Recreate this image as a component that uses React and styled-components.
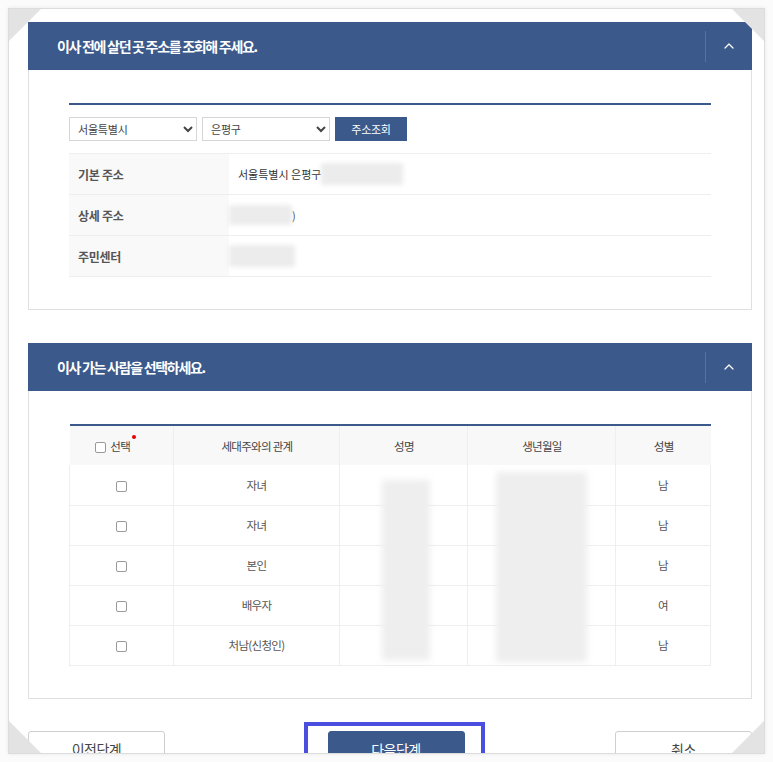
import React from "react";
import styled, { createGlobalStyle } from "styled-components";
import { ChevronUp } from "lucide-react";

const GlobalStyle = createGlobalStyle`
  html, body { margin: 0; padding: 0; background: #fbfbfb; }
  body { font-family: "Noto Sans CJK KR", "Noto Sans", sans-serif; color: #444; }
  * { box-sizing: border-box; }
`;

const Frame = styled.div`
  position: relative;
  margin: 8px;
  width: 757px;
  height: 746px;
  background: #fff;
  border: 1px solid #dcdcdc;
  box-shadow: 0 0 4px rgba(0, 0, 0, 0.08);
  overflow: hidden;
  padding: 13px 12px 0 19px;
`;

const Corner = styled.div`
  position: absolute;
  width: 32px;
  height: 32px;
  background: #e3e3e3;
  z-index: 5;
  ${(p) => (p.$v === "top" ? "top: 0;" : "bottom: 0;")}
  ${(p) => (p.$h === "left" ? "left: 0;" : "right: 0;")}
  clip-path: ${(p) =>
    p.$v === "top" && p.$h === "left"
      ? "polygon(0 0, 100% 0, 0 100%)"
      : p.$v === "top"
      ? "polygon(0 0, 100% 0, 100% 100%)"
      : p.$h === "left"
      ? "polygon(0 0, 100% 100%, 0 100%)"
      : "polygon(100% 0, 100% 100%, 0 100%)"};
`;

const Panel = styled.section`
  border: 1px solid #e0e0e0;
  border-top: none;
  margin-bottom: 33px;
`;

const PanelHead = styled.div`
  height: 48px;
  margin: 0 -1px;
  background: #3b5a8b;
  display: flex;
  align-items: center;
  justify-content: space-between;
  padding-left: 29px;
`;

const PanelTitle = styled.h2`
  margin: 0;
  color: #fff;
  font-size: 14px;
  font-weight: 700;
  letter-spacing: -1.3px;
`;

const Toggle = styled.div`
  width: 47px;
  height: 31px;
  border-left: 1px solid rgba(255, 255, 255, 0.15);
  display: flex;
  align-items: center;
  justify-content: center;
  color: #fff;
`;

const PanelBody = styled.div`
  padding: 33px 40px 32px 40px;
`;

const SearchBar = styled.div`
  border-top: 2px solid #3b5a8b;
  padding-top: 12px;
  display: flex;
  gap: 5px;
  margin-bottom: 12px;
`;

const Select = styled.select`
  width: 128px;
  height: 24px;
  border: 1px solid #d6d6d6;
  background: #fff;
  font-family: inherit;
  font-size: 11px;
  letter-spacing: -0.2px;
  color: #444;
  padding: 0 4px;
`;

const SearchButton = styled.button`
  width: 72px;
  height: 24px;
  border: none;
  background: #3b5a8b;
  color: #fff;
  font-family: inherit;
  font-size: 11px;
  letter-spacing: -0.3px;
`;

const InfoTable = styled.div`
  border-top: 1px solid #eee;
`;

const InfoRow = styled.div`
  display: grid;
  grid-template-columns: 160px 1fr;
  height: 41px;
  border-bottom: 1px solid #eee;
`;

const InfoLabel = styled.div`
  background: #f9f9f9;
  display: flex;
  align-items: center;
  padding-left: 9px;
  font-size: 12px;
  font-weight: 700;
  letter-spacing: -0.3px;
  color: #555;
`;

const InfoValue = styled.div`
  display: flex;
  align-items: center;
  padding-left: ${(p) => (p.$flush ? "0" : "9px")};
  font-size: 11px;
  color: #333;
`;

const Blur = styled.span`
  display: inline-block;
  width: ${(p) => p.$w}px;
  height: ${(p) => p.$h || 22}px;
  background: #ececec;
  filter: blur(2px);
  border-radius: 2px;
`;

const TableWrap = styled.div`
  position: relative;
`;

const Grid = styled.table`
  width: 100%;
  border-collapse: collapse;
  border-top: 2px solid #3b5a8b;
  table-layout: fixed;
  font-size: 11.5px;
  letter-spacing: -0.7px;
  color: #555;
`;

const Th = styled.th`
  height: 40px;
  background: #f8f8f8;
  font-weight: 400;
  color: #444;
  border-right: 1px solid #eee;
  padding-right: ${(p) => (p.$shift ? "18px" : "0")};
  &:last-child { border-right: none; }
`;

const Td = styled.td`
  height: 40px;
  text-align: center;
  border: 1px solid #eee;
  border-top: none;
`;

const Check = styled.span`
  display: inline-block;
  width: 11px;
  height: 11px;
  border: 1px solid #999;
  border-radius: 2px;
  vertical-align: middle;
  margin-right: ${(p) => (p.$gap ? "4px" : "0")};
  background: #fff;
`;

const Required = styled.span`
  position: relative;
  &::after {
    content: "";
    position: absolute;
    right: -6px;
    top: -3px;
    width: 4px;
    height: 4px;
    border-radius: 50%;
    background: #e60000;
  }
`;

const Redaction = styled.div`
  position: absolute;
  left: ${(p) => p.$x}px;
  top: ${(p) => p.$y}px;
  width: ${(p) => p.$w}px;
  height: ${(p) => p.$h}px;
  background: #eeeeee;
  filter: blur(3px);
`;

const Actions = styled.div`
  display: flex;
  justify-content: space-between;
  align-items: flex-start;
  margin-top: -10px;
`;

const Button = styled.button`
  width: 137px;
  height: 42px;
  margin-top: 9px;
  border: 1px solid ${(p) => (p.$primary ? "#3b5a8b" : "#cfcfcf")};
  border-radius: 3px;
  background: ${(p) => (p.$primary ? "#3b5a8b" : "#fff")};
  color: ${(p) => (p.$primary ? "#fff" : "#444")};
  font-family: inherit;
  font-size: 14px;
  letter-spacing: -0.5px;
  padding: 0 0 6px;
`;

const Highlight = styled.div`
  border: 4px solid #4b4fe0;
  padding: 5px 16px 10px 20px;
  margin-left: 8px;
`;

const members = [
  { rel: "자녀", sex: "남" },
  { rel: "자녀", sex: "남" },
  { rel: "본인", sex: "남" },
  { rel: "배우자", sex: "여" },
  { rel: "처남(신청인)", sex: "남" },
];

export default function App() {
  return (
    <>
      <GlobalStyle />
      <Frame>
        <Corner $v="top" $h="left" />
        <Corner $v="top" $h="right" />
        <Corner $v="bottom" $h="left" />
        <Corner $v="bottom" $h="right" />

        <Panel>
          <PanelHead>
            <PanelTitle>이사 전에 살던 곳 주소를 조회해 주세요.</PanelTitle>
            <Toggle>
              <ChevronUp size={16} strokeWidth={1.8} />
            </Toggle>
          </PanelHead>
          <PanelBody>
            <SearchBar>
              <Select defaultValue="서울특별시">
                <option>서울특별시</option>
              </Select>
              <Select defaultValue="은평구">
                <option>은평구</option>
              </Select>
              <SearchButton>주소조회</SearchButton>
            </SearchBar>
            <InfoTable>
              <InfoRow>
                <InfoLabel>기본 주소</InfoLabel>
                <InfoValue>
                  서울특별시 은평구 <Blur $w={82} $h={22} />
                </InfoValue>
              </InfoRow>
              <InfoRow>
                <InfoLabel>상세 주소</InfoLabel>
                <InfoValue $flush>
                  <Blur $w={63} $h={20} />)
                </InfoValue>
              </InfoRow>
              <InfoRow>
                <InfoLabel>주민센터</InfoLabel>
                <InfoValue $flush>
                  <Blur $w={66} $h={22} />
                </InfoValue>
              </InfoRow>
            </InfoTable>
          </PanelBody>
        </Panel>

        <Panel>
          <PanelHead>
            <PanelTitle>이사 가는 사람을 선택하세요.</PanelTitle>
            <Toggle>
              <ChevronUp size={16} strokeWidth={1.8} />
            </Toggle>
          </PanelHead>
          <PanelBody>
            <TableWrap>
              <Grid>
                <colgroup>
                  <col style={{ width: 104 }} />
                  <col style={{ width: 166 }} />
                  <col style={{ width: 128 }} />
                  <col style={{ width: 148 }} />
                  <col />
                </colgroup>
                <thead>
                  <tr>
                    <Th $shift>
                      <Check $gap />
                      <Required>선택</Required>
                    </Th>
                    <Th>세대주와의 관계</Th>
                    <Th>성명</Th>
                    <Th>생년월일</Th>
                    <Th>성별</Th>
                  </tr>
                </thead>
                <tbody>
                  {members.map((m, i) => (
                    <tr key={i}>
                      <Td>
                        <Check />
                      </Td>
                      <Td>{m.rel}</Td>
                      <Td />
                      <Td />
                      <Td>{m.sex}</Td>
                    </tr>
                  ))}
                </tbody>
              </Grid>
              <Redaction $x={313} $y={56} $w={48} $h={180} />
              <Redaction $x={427} $y={48} $w={91} $h={190} />
            </TableWrap>
          </PanelBody>
        </Panel>

        <Actions>
          <Button>이전단계</Button>
          <Highlight>
            <Button $primary style={{ marginTop: 0 }}>다음단계</Button>
          </Highlight>
          <Button>취소</Button>
        </Actions>
      </Frame>
    </>
  );
}
